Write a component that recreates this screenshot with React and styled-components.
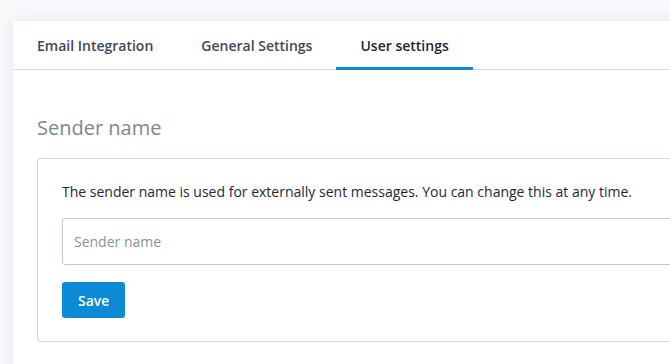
import React from 'react';
import styled, { createGlobalStyle } from 'styled-components';

const GlobalStyle = createGlobalStyle`
  html, body {
    margin: 0;
    padding: 0;
    background: #f7f9fb;
    overflow: hidden;
    font-family: "Open Sans", "Noto Sans", sans-serif;
  }
`;

const tabs = ['Email Integration', 'General Settings', 'User settings'];

const App = () => {
  return (
    <Page>
      <GlobalStyle />
      <Card>
        <TabBar>
          {tabs.map(t => (
            <Tab key={t} active={t === 'User settings'}>{t}</Tab>
          ))}
        </TabBar>
        <Content>
          <Heading>Sender name</Heading>
          <Panel>
            <Description>
              The sender name is used for externally sent messages. You can change this at any time.
            </Description>
            <Input placeholder="Sender name" />
            <SaveButton>Save</SaveButton>
          </Panel>
        </Content>
      </Card>
    </Page>
  );
};

const Page = styled.div`
  padding: 21px 0 0 13px;
  min-height: 364px;
  box-sizing: border-box;
  overflow: hidden;
`;

const Card = styled.div`
  width: 720px;
  min-height: 360px;
  background: #ffffff;
  box-shadow: 0 0 14px rgba(60, 80, 110, 0.1);
`;

const TabBar = styled.nav`
  display: flex;
  height: 48px;
  border-bottom: 1px solid #d4dae0;
`;

const Tab = styled.div`
  position: relative;
  display: flex;
  align-items: center;
  padding: 0 24px;
  font-size: 14px;
  font-weight: 600;
  color: ${p => (p.active ? '#1d2734' : '#3e4855')};

  &::after {
    content: '';
    display: ${p => (p.active ? 'block' : 'none')};
    position: absolute;
    left: 0;
    right: 0;
    bottom: -1px;
    height: 3px;
    background: #0b8ad6;
  }
`;

const Content = styled.div`
  padding: 44px 24px 24px;
`;

const Heading = styled.h2`
  margin: 0 0 16px;
  font-size: 20px;
  line-height: 28px;
  font-weight: 400;
  color: #7b8896;
`;

const Panel = styled.div`
  display: flex;
  flex-direction: column;
  align-items: flex-start;
  border: 1px solid #cfd6de;
  border-radius: 3px;
  padding: 23px 24px 23px;
`;

const Description = styled.p`
  margin: 0 0 16px;
  font-size: 14px;
  line-height: 20px;
  color: #1f2934;
`;

const Input = styled.input`
  box-sizing: border-box;
  width: 100%;
  height: 47px;
  margin: 0 0 17px;
  padding: 0 11px;
  border: 1px solid #c4cad1;
  border-radius: 3px;
  font-family: inherit;
  font-size: 14px;
  color: #1f2934;
  outline: none;

  &::placeholder {
    color: #8793a0;
  }
`;

const SaveButton = styled.button`
  height: 36px;
  padding: 0 16px;
  border: none;
  border-radius: 3px;
  background: #0b8ad6;
  color: #ffffff;
  font-family: inherit;
  font-size: 14px;
  font-weight: 600;
  cursor: pointer;
`;

export default App;
